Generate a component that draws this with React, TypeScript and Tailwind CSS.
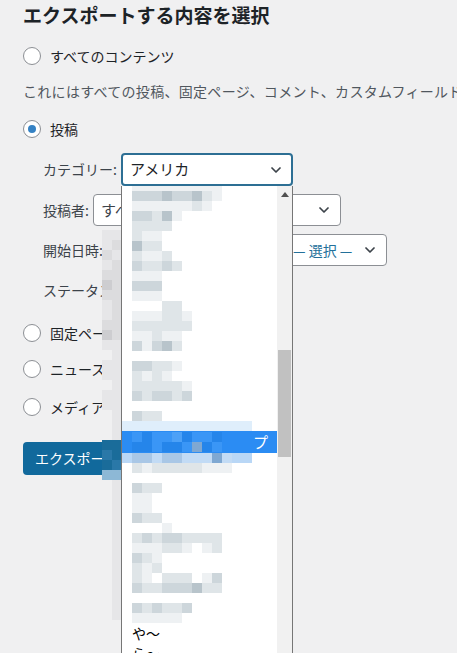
import { ReactNode } from 'react';

// mosaic shades used for the blurred list entries
const GRAY: Record<string, string> = {
  '0': 'bg-transparent',
  '1': 'bg-[#eef1f3]',
  '2': 'bg-[#dfe5e8]',
  '3': 'bg-[#cdd6db]',
  '4': 'bg-[#b8c4cb]',
};

const STRIP: Record<string, string> = {
  '0': 'bg-transparent',
  '1': 'bg-[#e6e6e8]',
  '2': 'bg-[#dcdcde]',
  '3': 'bg-[#cdcdd0]',
  p: 'bg-[#1a6c9a]',
  q: 'bg-[#2a78a8]',
  r: 'bg-[#8db8d6]',
};

const BLUE: Record<string, string> = {
  a: 'bg-[#3a96f6]',
  b: 'bg-[#2585ea]',
  c: 'bg-[#4da1f7]',
  d: 'bg-[#7fa8d2]',
  e: 'bg-[#a9c7e6]',
  f: 'bg-[#c2dbf5]',
};

const topRows = [
  '333433421',
  '11111121',
  '33241',
  '2222',
  '211',
  '422',
  '2112',
  '32232',
  '111',
  '333',
  '111',
  '00022',
  '111221',
  '222222',
  '11211',
  '31342',
  '0',
  '33221',
  '2121',
  '222221',
  '323323',
  '0',
  '322',
];

const bottomRows = [
  '2122222111',
  '0',
  '322',
  '11',
  '11',
  '322',
  '0001',
  '232332222',
  '111221012',
  '321',
  '212',
  '210222013',
  '322333422',
  '0',
  '323223',
  '11111',
];

const stripRows = [
  '11', '12', '21', '12', '22', '32', '22', '12', '12', '22', '32', '11', '01',
  '11', '11', '01', '11', '11', '01', '01', '01', 'pp', 'qp', 'pq', 'rr',
  '01', '01', '01', '01', '01', '01', '01', '01', '01', '01', '01', '01', '01', '01',
];

const MosaicRow = ({ cells, palette }: { cells: string; palette: Record<string, string> }) => (
  <div className="flex shrink-0 h-[10px] pl-[10px]">
    {cells.split('').map((c, i) => (
      <div key={i} className={`w-[10px] h-full ${palette[c]}`} />
    ))}
  </div>
);

const Chevron = ({ className = '' }: { className?: string }) => (
  <svg width="16" height="16" viewBox="0 0 20 20" className={className} fill="none">
    <path d="M5 7.5l5 5 5-5" stroke="currentColor" strokeWidth="2.2" strokeLinecap="round" strokeLinejoin="round" />
  </svg>
);

const Radio = ({ checked = false }: { checked?: boolean }) => (
  <span className="w-[18px] h-[18px] rounded-full border border-[#8c8f94] bg-white flex items-center justify-center shrink-0">
    {checked && <span className="w-[8px] h-[8px] rounded-full bg-[#3582c4]" />}
  </span>
);

const RadioRow = ({ label, checked, className = '' }: { label: string; checked?: boolean; className?: string }) => (
  <label className={`flex items-center gap-[9px] h-[30px] ${className}`}>
    <Radio checked={checked} />
    <span>{label}</span>
  </label>
);

const SelectBox = ({ children, className = '' }: { children: ReactNode; className?: string }) => (
  <div className={`h-[32px] bg-white border border-[#8c8f94] rounded-[4px] flex items-center justify-between pl-[7px] pr-[8px] ${className}`}>
    {children}
  </div>
);

export default function App() {
  return (
    <div className="relative min-h-[653px] overflow-hidden bg-[#f0f0f1] text-[#1d2327] text-[14px] font-[family-name:'Noto_Sans_CJK_JP','Noto_Sans',sans-serif]">
      <div className="flex flex-col pl-[23px]">
        <h2 className="h-[30px] flex items-center text-[19px] font-bold whitespace-nowrap">エクスポートする内容を選択</h2>

        <RadioRow label="すべてのコンテンツ" className="mt-[11px]" />
        <p className="h-[40px] flex items-center whitespace-nowrap text-[#50575e] tracking-[0.3px]">
          これにはすべての投稿、固定ページ、コメント、カスタムフィールド
        </p>
        <RadioRow label="投稿" checked className="h-[36px]" />

        <div className="flex flex-col pl-[20px] text-[#3c434a]">
          <div className="mt-[6px] h-[33px] flex items-center">
            <span className="w-[78px]">カテゴリー:</span>
            <div className="w-[172px] h-[33px] bg-white border-2 border-[#2d6f94] rounded-[4px] flex items-center justify-between pl-[7px] pr-[7px] text-[#1d2327]">
              <span className="text-[15px]">アメリカ</span>
              <Chevron className="text-[#3c434a]" />
            </div>
          </div>
          <div className="mt-[8px] h-[32px] flex items-center">
            <span className="w-[50px]">投稿者:</span>
            <SelectBox className="w-[248px] text-[15px]">
              <span>すべて</span>
              <Chevron className="text-[#3c434a]" />
            </SelectBox>
          </div>
          <div className="mt-[8px] h-[32px] flex items-center">
            <span className="w-[242px]">開始日時:</span>
            <SelectBox className="w-[102px]">
              <span className="text-[#23709a] whitespace-nowrap">— 選択 —</span>
              <Chevron className="text-[#3c434a]" />
            </SelectBox>
          </div>
          <div className="mt-[8px] h-[32px] flex items-center">
            <span>ステータス:</span>
          </div>
        </div>

        <RadioRow label="固定ページ" className="mt-[12px]" />
        <RadioRow label="ニュース" className="mt-[6px]" />
        <RadioRow label="メディア" className="mt-[8px]" />

        <div className="mt-[20px]">
          <button className="h-[33px] px-[12px] rounded-[4px] bg-[#11699c] text-white whitespace-nowrap">
            エクスポートファイルをダウンロード
          </button>
        </div>
      </div>

      {/* open category list */}
      <div className="absolute left-[121px] top-[186px] bottom-0 w-[172px] flex overflow-hidden bg-white border-x border-[#767676]">
        <div className="flex-1 flex flex-col">
          <div className="shrink-0 h-[5px] ml-[10px] w-[90px] bg-[#eef1f3]" />
          {topRows.map((r, i) => (
            <MosaicRow key={i} cells={r} palette={GRAY} />
          ))}
          <div className="shrink-0 h-[10px] w-[130px] bg-[#dfeefb]" />
          <div className="shrink-0 h-[22px] bg-[#2b8cf3] flex items-center justify-between pr-[9px]">
            <div className="flex flex-col">
              <MosaicRow cells="abaacbaab" palette={BLUE} />
              <MosaicRow cells="bbabbadba" palette={BLUE} />
            </div>
            <span className="text-white text-[15px]">プ</span>
          </div>
          <div className="shrink-0 h-[10px] w-[130px] bg-[#b9d7f6]">
            <MosaicRow cells="eefeefffdf" palette={BLUE} />
          </div>
          {bottomRows.map((r, i) => (
            <MosaicRow key={i} cells={r} palette={GRAY} />
          ))}
          <div className="shrink-0 h-[20px] flex items-center pl-[10px] text-black">や〜</div>
          <div className="shrink-0 h-[20px] flex items-center pl-[10px] text-black">ら〜</div>
        </div>
        <div className="w-[15px] bg-[#f1f1f1] flex flex-col items-center">
          <div className="h-[17px] flex items-center justify-center">
            <svg width="8" height="5" viewBox="0 0 8 5">
              <path d="M0 5L4 0L8 5Z" fill="#505050" />
            </svg>
          </div>
          <div className="mt-[147px] w-[13px] h-[107px] bg-[#c1c1c1]" />
        </div>
      </div>

      {/* blurred strip left of the list */}
      <div className="absolute left-[102px] top-[230px] flex flex-col">
        {stripRows.map((r, i) => (
          <div key={i} className="flex h-[10px]">
            <div className={`w-[10px] ${STRIP[r[0]]}`} />
            <div className={`w-[9px] ${STRIP[r[1]]}`} />
          </div>
        ))}
      </div>
    </div>
  );
}
